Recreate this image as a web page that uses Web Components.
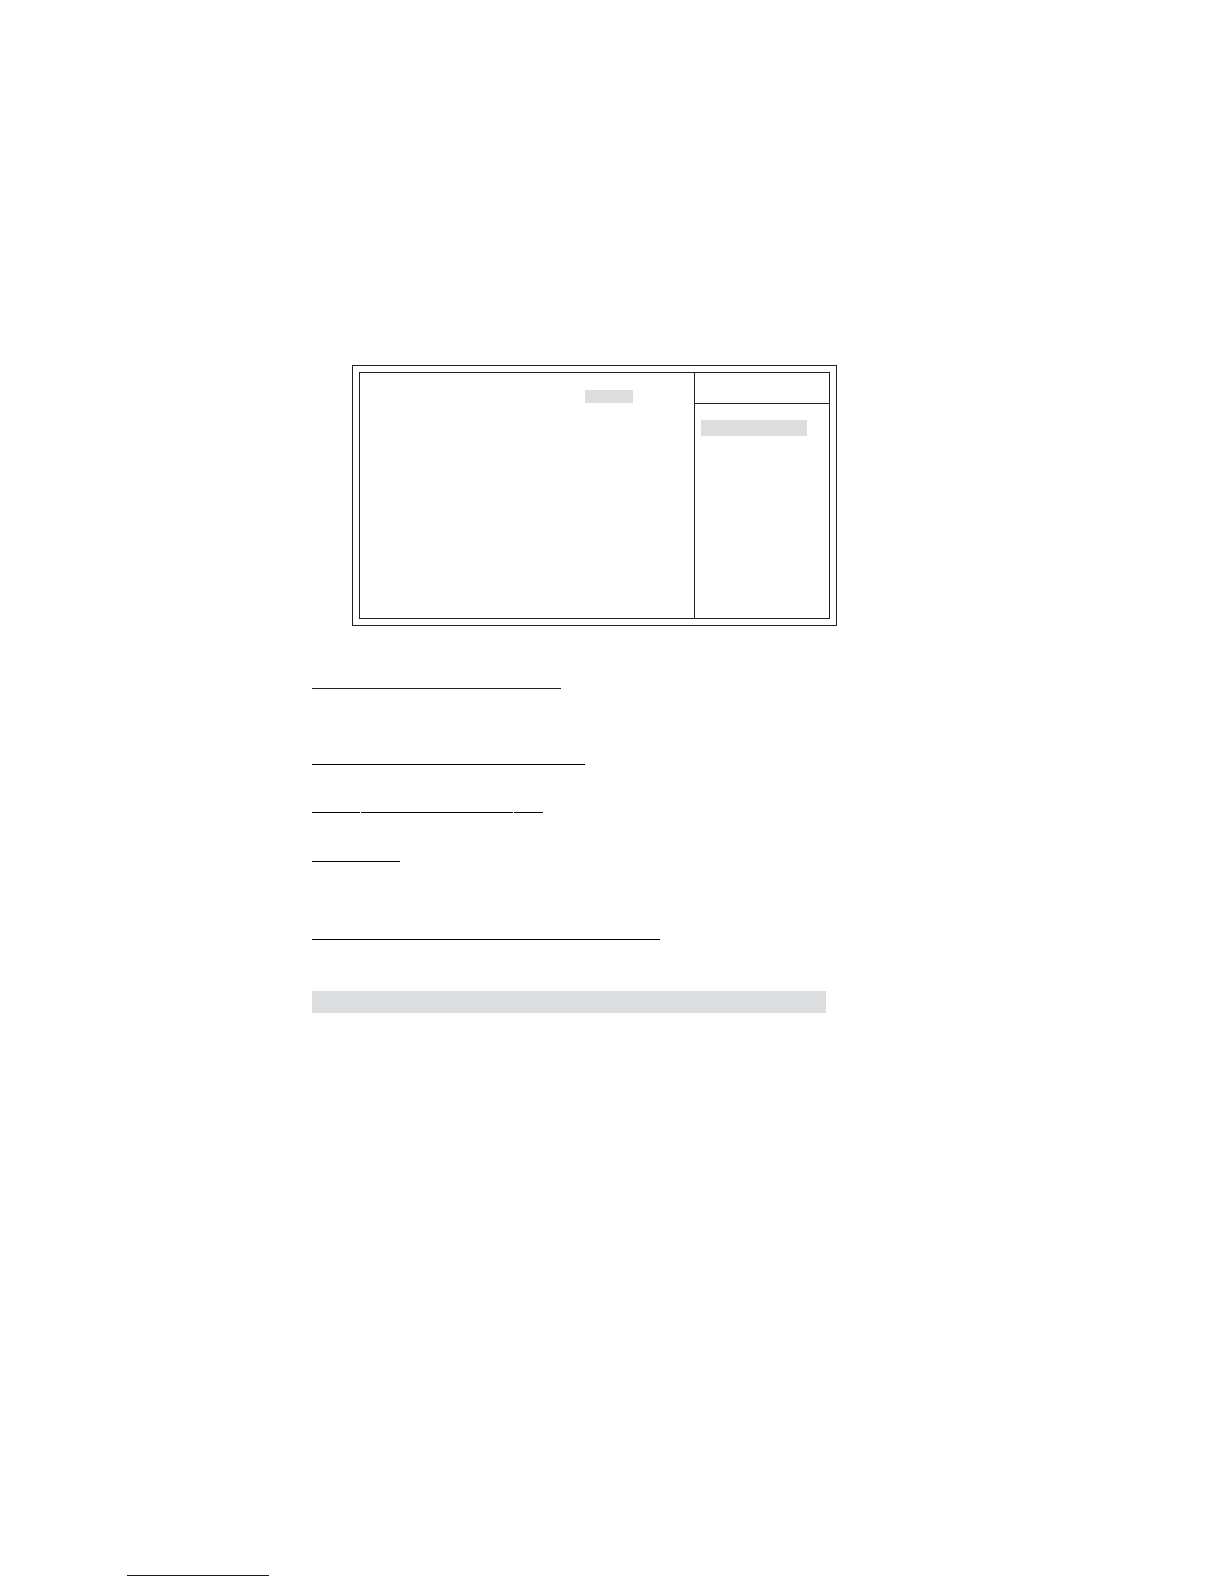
<!DOCTYPE html>
<html lang="en">
<head>
<meta charset="utf-8">
<meta name="viewport" content="width=device-width, initial-scale=1">
<title>Setup page</title>
<style>
    body {
        margin: 0;
        background: #ffffff;
        font-family: "Liberation Sans", sans-serif;
    }
</style>
</head>
<body>

<manual-page>
    <setup-frame>
        <shade-block slot="options" width="48" height="13"></shade-block>
        <shade-block slot="help" width="106" height="16"></shade-block>
    </setup-frame>

    <rule-list>
        <rule-line lengths="249" tone="#231f20"></rule-line>
        <rule-line lengths="273" space="75"></rule-line>
        <rule-line lengths="48 152 29" space="47"></rule-line>
        <rule-line lengths="88" space="48"></rule-line>
        <rule-line lengths="348" space="77"></rule-line>
    </rule-list>

    <shade-block width="514" height="22"></shade-block>

    <rule-line slot="footer" lengths="142" tone="#0c0c96"></rule-line>
</manual-page>

<script>
/**
 * Page shell: a body column and a footer at the bottom edge.
 */
class ManualPage extends HTMLElement {
    constructor() {
        super();
        this.attachShadow({ mode: 'open' });
    }

    connectedCallback() {
        this.shadowRoot.innerHTML = `
            <style>
                :host {
                    display: flex;
                    flex-direction: column;
                    box-sizing: border-box;
                    min-height: 100vh;
                    padding: 365px 0 8px;
                }

                main {
                    display: flex;
                    flex-direction: column;
                    padding: 0 387px 0 312px;
                }

                ::slotted(rule-list) {
                    margin: 62px 0 51px;
                }

                footer {
                    margin-top: auto;
                    padding: 0 127px;
                }
            </style>

            <main><slot></slot></main>
            <footer><slot name="footer"></slot></footer>
        `;
    }
}

/**
 * Double-bordered setup screen with an options pane and a help pane.
 */
class SetupFrame extends HTMLElement {
    constructor() {
        super();
        this.attachShadow({ mode: 'open' });
    }

    connectedCallback() {
        this.shadowRoot.innerHTML = `
            <style>
                :host {
                    display: block;
                    margin-left: 40px;
                    min-width: 320px;
                    box-sizing: border-box;
                    padding: 6px;
                    border: 1px solid #231f20;
                }

                .screen {
                    display: flex;
                    min-height: 245px;
                    border: 1px solid #231f20;
                }

                .options {
                    display: flex;
                    flex: 1;
                    justify-content: flex-end;
                    align-items: flex-start;
                    padding: 17px 61px 0 0;
                }

                .side {
                    flex: 0 0 134px;
                    border-left: 1px solid #231f20;
                }

                .heading {
                    height: 30px;
                    border-bottom: 1px solid #231f20;
                }

                .help {
                    padding: 16px 6px 0;
                }
            </style>

            <div class="screen">
                <div class="options"><slot name="options"></slot></div>
                <div class="side">
                    <div class="heading"></div>
                    <div class="help"><slot name="help"></slot></div>
                </div>
            </div>
        `;
    }
}

class RuleList extends HTMLElement {
    constructor() {
        super();
        this.attachShadow({ mode: 'open' });
    }

    connectedCallback() {
        this.shadowRoot.innerHTML = `
            <style>
                :host {
                    display: flex;
                    flex-direction: column;
                }
            </style>
            <slot></slot>
        `;
    }
}

/**
 * Thin rule made of one or more segments.
 *
 * Usage:
 *   <rule-line lengths="48 152" space="47" tone="#000"></rule-line>
 */
class RuleLine extends HTMLElement {
    constructor() {
        super();
        this.attachShadow({ mode: 'open' });
    }

    get lengths() { return (this.getAttribute('lengths') || '').split(' '); }
    get space() { return this.getAttribute('space') || 0; }
    get tone() { return this.getAttribute('tone') || '#000000'; }

    connectedCallback() {
        this.shadowRoot.innerHTML = `
            <style>
                :host {
                    display: flex;
                    gap: 1px;
                    margin-top: ${this.space}px;
                }

                .segment {
                    height: 1px;
                    background: ${this.tone};
                }
            </style>
            ${this.lengths.map(n => `<div class="segment" style="width: ${n}px"></div>`).join('')}
        `;
    }
}

/**
 * Grey highlight block.
 */
class ShadeBlock extends HTMLElement {
    constructor() {
        super();
        this.attachShadow({ mode: 'open' });
    }

    connectedCallback() {
        this.shadowRoot.innerHTML = `
            <style>
                :host {
                    display: block;
                    width: ${this.getAttribute('width')}px;
                    max-width: 100%;
                    height: ${this.getAttribute('height')}px;
                    background: #dcddde;
                }
            </style>
        `;
    }
}

customElements.define('manual-page', ManualPage);
customElements.define('setup-frame', SetupFrame);
customElements.define('rule-list', RuleList);
customElements.define('rule-line', RuleLine);
customElements.define('shade-block', ShadeBlock);
</script>
</body>
</html>
